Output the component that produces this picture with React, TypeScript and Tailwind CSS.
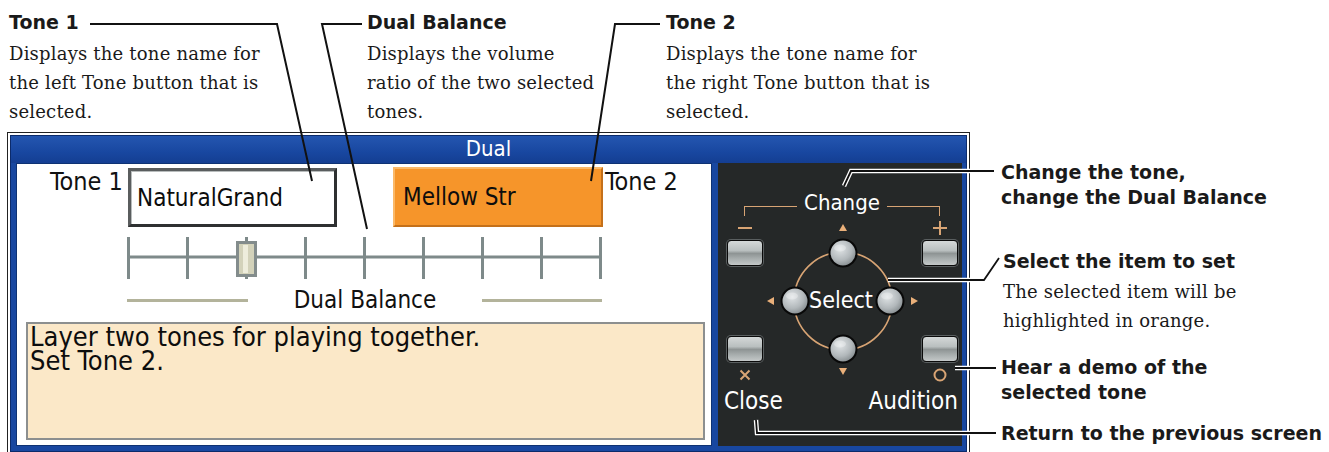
import React from "react";

const PIX = "font-['DejaVu_Sans_Condensed','DejaVu_Sans',sans-serif] font-stretch-condensed";
const BOLD = "font-['DejaVu_Sans',sans-serif] font-bold text-[19px] leading-[25px] text-[#1a1a1a] whitespace-nowrap";
const SERIF = "font-['DejaVu_Serif',serif] text-[18px] leading-[29px] tracking-[0.2px] text-[#1a1a1a] whitespace-nowrap";
const TAN = "#d8a474";

function RectBtn() {
  return (
    <div className="w-[36px] h-[26px] rounded-[4px] border border-[#0a0a0a] shadow-[0_0_0_1px_#5a5f60] bg-[linear-gradient(180deg,#d4d8d8_0%,#b9bfbf_40%,#8e9494_52%,#a9afaf_75%,#c4c8c8_100%)]" />
  );
}

function Slider() {
  const ticks = [0, 1, 2, 3, 4, 5, 6, 7, 8];
  return (
    <svg width="476" height="44" viewBox="0 0 476 44" className="block">
      <line x1="1.5" y1="20" x2="473.5" y2="20" stroke="#7e8a8a" strokeWidth="3" />
      {ticks.map((i) => (
        <line key={i} x1={1.5 + 59 * i} y1="0" x2={1.5 + 59 * i} y2="42" stroke="#7e8a8a" strokeWidth="3" />
      ))}
      <rect x="110.5" y="5.5" width="18" height="33" fill="#d3d2ba" stroke="#838c8c" strokeWidth="3" />
      <rect x="116" y="8" width="5" height="28" fill="#eeeddc" />
    </svg>
  );
}

function DPad() {
  const c = (cx: number, cy: number, k: string) => (
    <g key={k}>
      <circle cx={cx} cy={cy} r="13.5" fill="url(#ball)" stroke="#080808" strokeWidth="2" />
      <ellipse cx={cx - 3} cy={cy - 5} rx="6" ry="3.5" fill="#ffffff" opacity="0.3" />
    </g>
  );
  return (
    <div className="relative w-[159px] h-[158px]">
      <svg width="159" height="158" viewBox="0 0 159 158" className="block">
        <defs>
          <radialGradient id="ball" cx="0.4" cy="0.35" r="0.7">
            <stop offset="0" stopColor="#e0e4e6" />
            <stop offset="0.6" stopColor="#b2b8bb" />
            <stop offset="1" stopColor="#7f8689" />
          </radialGradient>
        </defs>
        <circle cx="80" cy="80" r="49" fill="none" stroke={TAN} strokeWidth="1.6" />
        <polygon points="76,10 84,10 80,3" fill="#eab07a" />
        <polygon points="76,147 84,147 80,154" fill="#eab07a" />
        <polygon points="11,76 11,84 4,80" fill="#eab07a" />
        <polygon points="148,76 148,84 155,80" fill="#eab07a" />
        {c(80, 32, "t")}
        {c(80, 128, "b")}
        {c(32, 80, "l")}
        {c(127, 80, "r")}
      </svg>
      <div className={`absolute inset-0 flex items-center justify-center ${PIX} text-[23px] leading-[26px] text-white`}>
        <span className="-mt-[1px] -ml-[3px]">Select</span>
      </div>
    </div>
  );
}

export default function App() {
  return (
    <div className="relative w-[1329px] h-[452px] overflow-hidden bg-white">
      {/* top annotations */}
      <div className="flex pl-[9px] pt-[10px]">
        <div className="w-[358px]">
          <div className={BOLD + " leading-[24px]"}>Tone 1</div>
          <div className={SERIF + " mt-[4px]"}>
            Displays the tone name for
            <br />
            the left Tone button that is
            <br />
            selected.
          </div>
        </div>
        <div className="w-[299px]">
          <div className={BOLD + " leading-[24px]"}>Dual Balance</div>
          <div className={SERIF + " mt-[4px]"}>
            Displays the volume
            <br />
            ratio of the two selected
            <br />
            tones.
          </div>
        </div>
        <div>
          <div className={BOLD + " leading-[24px]"}>Tone 2</div>
          <div className={SERIF + " mt-[4px]"}>
            Displays the tone name for
            <br />
            the right Tone button that is
            <br />
            selected.
          </div>
        </div>
      </div>

      {/* screen + right annotations */}
      <div className="flex pl-[7px] mt-[6px]">
        <div className="w-[963px] shrink-0 border border-[#222222] p-[2px] bg-white">
          <div className="border border-[#0c2b6b] bg-[#1847a0] pb-[5px]">
            <div className={`h-[27px] flex items-center justify-center ${PIX} text-[22px] leading-[26px] text-white bg-[linear-gradient(180deg,#2456b0_0%,#1847a0_60%,#143e92_100%)]`}>
              <span className="-mt-[2px]">Dual</span>
            </div>
            <div className="flex pl-[5px] gap-[6px]">
              {/* white panel */}
              <div className="w-[696px] h-[283px] bg-white flex flex-col shadow-[inset_0_0_0_1px_#0e3273]">
                <div className="mt-[4px] h-[60px] flex pl-[34px]">
                  <div className={`w-[78px] mt-[2px] ${PIX} text-[25px] leading-[26px] text-[#111]`}>Tone 1</div>
                  <div className="w-[209px] h-[59px] mt-[1px] border-[3px] border-t-[#5a5d5e] border-l-[#5a5d5e] border-r-[#2e3031] border-b-[#2e3031] bg-white flex items-center pl-[6px] shadow-[inset_1px_1px_0_#b8bcbc]">
                    <span className={`${PIX} text-[24px] leading-[26px] text-[#0d0d0d]`}>NaturalGrand</span>
                  </div>
                  <div className="ml-[56px] w-[210px] h-[60px] bg-[#f6952a] border-[2px] border-t-[#fbb968] border-l-[#fbb968] border-r-[#c4701a] border-b-[#c4701a] flex items-center pl-[8px]">
                    <span className={`${PIX} text-[24px] leading-[26px] text-[#0d0d0d]`}>Mellow Str</span>
                  </div>
                  <div className={`ml-[2px] mt-[2px] ${PIX} text-[25px] leading-[26px] text-[#111]`}>Tone 2</div>
                </div>
                <div className="mt-[10px] ml-[111px]">
                  <Slider />
                </div>
                <div className="mt-[6px] ml-[111px] h-[26px] flex items-center">
                  <div className="w-[121px] h-[3px] bg-[#b3b39b]" />
                  <div className={`w-[234px] text-center ${PIX} text-[24px] leading-[26px] text-[#111]`}>Dual Balance</div>
                  <div className="w-[120px] h-[3px] bg-[#b3b39b]" />
                </div>
                <div className={`mt-[9px] ml-[10px] w-[679px] h-[118px] border-[2px] border-[#8c8f8f] bg-[#fbe8c8] pl-[2px] pt-[1px] ${PIX} text-[27px] text-[#0d0d0d] whitespace-nowrap`}>
                  <div className="h-[24px] leading-[24px]">Layer two tones for playing together.</div>
                  <div className="h-[24px] leading-[24px]">Set Tone 2.</div>
                </div>
              </div>
              {/* dark panel */}
              <div className="w-[244px] h-[283px] bg-[#252828] flex flex-col">
                <div className="ml-[26px] w-[196px] h-[26px] mt-[27px] flex">
                  <div className="flex-1 mt-[16px] h-[10px] border-t-[1.5px] border-l-[1.5px] border-[#d8a474]" />
                  <div className={`px-[7px] ${PIX} text-[22px] leading-[26px] text-white`}>Change</div>
                  <div className="flex-1 mt-[16px] h-[10px] border-t-[1.5px] border-r-[1.5px] border-[#d8a474]" />
                </div>
                <div className="mt-[5px] ml-[9px] h-[167px] flex">
                  <div className="w-[36px] flex flex-col items-center">
                    <div className="h-[14px] flex items-center">
                      <div className="w-[14px] h-[2px] bg-[#d8a474]" />
                    </div>
                    <div className="mt-[5px]"><RectBtn /></div>
                    <div className="mt-[70px]"><RectBtn /></div>
                    <div className="h-[26px] flex items-center">
                      <svg width="12" height="12" viewBox="0 0 12 12">
                        <path d="M1.5 1.5 L10.5 10.5 M10.5 1.5 L1.5 10.5" stroke="#d8a474" strokeWidth="2" />
                      </svg>
                    </div>
                  </div>
                  <DPad />
                  <div className="w-[36px] flex flex-col items-center">
                    <div className="h-[14px] flex items-center">
                      <svg width="16" height="16" viewBox="0 0 16 16">
                        <path d="M1 8 H15 M8 1 V15" stroke="#d8a474" strokeWidth="2" />
                      </svg>
                    </div>
                    <div className="mt-[5px]"><RectBtn /></div>
                    <div className="mt-[70px]"><RectBtn /></div>
                    <div className="h-[26px] flex items-center">
                      <svg width="14" height="14" viewBox="0 0 14 14">
                        <circle cx="7" cy="7" r="5.5" fill="none" stroke="#d8a474" strokeWidth="2" />
                      </svg>
                    </div>
                  </div>
                </div>
                <div className={`mt-[0px] ml-[6px] mr-[4px] flex justify-between ${PIX} text-[24px] leading-[26px] text-white`}>
                  <span>Close</span>
                  <span>Audition</span>
                </div>
              </div>
            </div>
          </div>
        </div>

        {/* right annotations */}
        <div className="ml-[31px] flex flex-col">
          <div className={BOLD + " mt-[28px]"}>
            Change the tone,
            <br />
            change the Dual Balance
          </div>
          <div className={BOLD + " mt-[39px] ml-[2px]"}>Select the item to set</div>
          <div className={SERIF + " mt-[3px] ml-[2px]"}>
            The selected item will be
            <br />
            highlighted in orange.
          </div>
          <div className={BOLD + " mt-[20px]"}>
            Hear a demo of the
            <br />
            selected tone
          </div>
          <div className={BOLD + " mt-[16px]"}>Return to the previous screen</div>
        </div>
      </div>

      {/* callout lines */}
      <svg className="absolute inset-0 pointer-events-none" width="1329" height="452" viewBox="0 0 1329 452">
        <g fill="none" strokeLinejoin="miter">
          <polyline points="90,24 277,24 312,181" stroke="#111" strokeWidth="2" />
          <polyline points="362,24 322,24 367,229" stroke="#111" strokeWidth="2" />
          <polyline points="660,24 615,24 591,181" stroke="#111" strokeWidth="2" />
          <polyline points="994,171 851,171 844,186" stroke="#fff" strokeWidth="4.5" />
          <polyline points="994,171 851,171 844,186" stroke="#111" strokeWidth="1.8" />
          <polyline points="888,280 984,280 999,258" stroke="#fff" strokeWidth="4.5" />
          <polyline points="888,280 984,280 999,258" stroke="#111" strokeWidth="1.8" />
          <polyline points="955,368 996,368" stroke="#fff" strokeWidth="4.5" />
          <polyline points="955,368 996,368" stroke="#111" strokeWidth="1.8" />
          <polyline points="756,420 757,433 996,433" stroke="#fff" strokeWidth="4.5" />
          <polyline points="756,420 757,433 996,433" stroke="#111" strokeWidth="1.8" />
        </g>
      </svg>
    </div>
  );
}
